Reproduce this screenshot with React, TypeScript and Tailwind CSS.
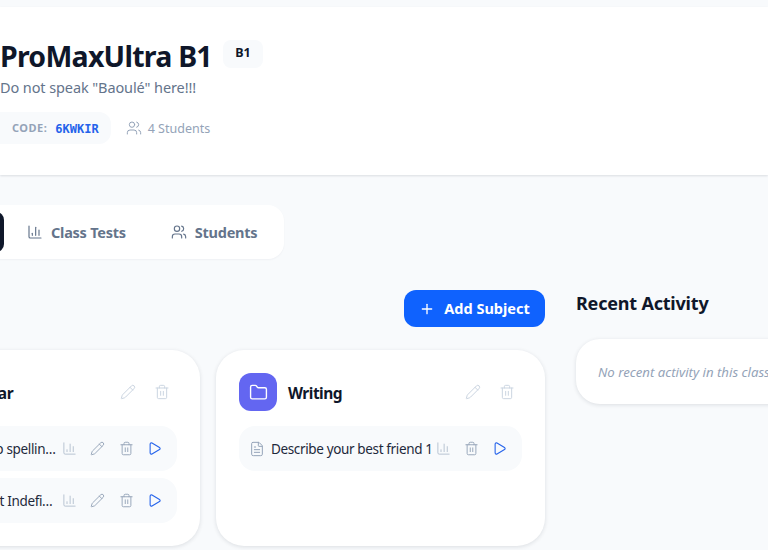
import { ChartColumn, FileText, Folder, Pencil, Play, Plus, Trash2, Users } from "lucide-react";

const font = { fontFamily: '"Noto Sans", sans-serif' };

function Row({ text, edit = true, last = false }: { text: string; edit?: boolean; last?: boolean }) {
  return (
    <div className={`flex h-[45px] items-center rounded-2xl bg-[#f8fafc] pl-[10px] pr-[8px] ${last ? "" : "mb-[7px]"}`}>
      <FileText className="h-[16px] w-[16px] shrink-0 text-[#94a3b8]" strokeWidth={1.5} />
      <span className="mt-[2px] ml-[6px] min-w-0 flex-1 truncate text-[13.5px] font-normal tracking-[-0.36px] text-[#1e293b]">{text}</span>
      <div className="flex shrink-0 items-center">
        <button className="mr-[4px] flex h-[28px] w-[20px] items-center justify-center text-[#b4c0cf]">
          <ChartColumn className="h-[15px] w-[15px]" strokeWidth={1.5} />
        </button>
        {edit && (
          <button className="flex h-[28px] w-[29px] items-center justify-center text-[#94a3b8]">
            <Pencil className="h-[15px] w-[15px]" strokeWidth={1.5} />
          </button>
        )}
        <button className="flex h-[28px] w-[28px] items-center justify-center text-[#94a3b8]">
          <Trash2 className="h-[15px] w-[15px]" strokeWidth={1.5} />
        </button>
        <button className="flex h-[28px] w-[29px] items-center justify-center text-[#2563eb]">
          <Play className="h-[15px] w-[15px]" strokeWidth={1.75} />
        </button>
      </div>
    </div>
  );
}

function SubjectCard({ title, children }: { title: string; children: React.ReactNode }) {
  return (
    <div className="h-[196px] w-[329px] shrink-0 rounded-[28px] bg-white px-[23px] pt-[23px] shadow-[0_1px_4px_rgba(15,23,42,0.12)]">
      <div className="mb-[15px] flex items-center">
        <div className="flex h-[38px] w-[38px] items-center justify-center rounded-xl bg-[#6366f1]">
          <Folder className="h-[19px] w-[19px] text-white" strokeWidth={1.75} />
        </div>
        <div className="mt-[3px] ml-[11px] flex-1 text-[15.5px] font-bold tracking-[-0.5px] text-[#0f172a]">{title}</div>
        <div className="flex items-center gap-[18px] pr-[7px] text-[#cbd5e1]">
          <Pencil className="h-[16px] w-[16px]" strokeWidth={1.5} />
          <Trash2 className="h-[16px] w-[16px]" strokeWidth={1.5} />
        </div>
      </div>
      {children}
    </div>
  );
}

export default function App() {
  return (
    <div className="h-[550px] w-[768px] overflow-hidden bg-[#f8fafc]" style={font}>
      <div className="mt-[7px] h-[168px] bg-white pt-[30px] shadow-[0_1px_2px_rgba(15,23,42,0.12)]">
        <div className="flex items-center">
          <h1 className="text-[28.5px] leading-[38px] font-bold tracking-[-0.75px] whitespace-nowrap text-[#0f172a]">ProMaxUltra B1</h1>
          <span className="mb-[5px] ml-[11px] flex h-[28px] w-[40px] items-center justify-center rounded-lg bg-[#f8fafc] text-[12.5px] font-bold text-[#0f172a]">B1</span>
        </div>
        <p className="mt-[2px] text-[14.5px] leading-[20px] tracking-[-0.1px] text-[#64748b]">Do not speak "Baoulé" here!!!</p>
        <div className="mt-[15px] flex items-center">
          <div className="ml-[-12px] flex h-[32px] items-center rounded-xl bg-[#f8fafc] pt-[1px] pr-[12px] pl-[24px]">
            <span className="text-[11px] font-bold tracking-[0.5px] text-[#94a3b8]">CODE:</span>
            <span className="ml-[8px] text-[12px] font-bold text-[#2563eb]" style={{ fontFamily: '"DejaVu Sans Mono", monospace' }}>6KWKIR</span>
          </div>
          <Users className="ml-[15px] h-[16px] w-[16px] text-[#94a3b8]" strokeWidth={1.5} />
          <span className="mt-[2px] ml-[6px] text-[12.5px] text-[#94a3b8]">4 Students</span>
        </div>
      </div>

      <div className="mt-[30px] ml-[-60px] flex h-[54px] w-[344px] items-center rounded-2xl bg-white pl-[8px] shadow-[0_1px_2px_rgba(15,23,42,0.04)]">
        <div className="h-[40px] w-[56px] shrink-0 rounded-lg bg-[#0f172a]" />
        <div className="ml-[23px] flex items-center gap-[8px] text-[14.5px] font-bold tracking-[-0.25px] text-[#64748b]">
          <ChartColumn className="h-[16px] w-[16px]" strokeWidth={1.75} />
          <span className="mt-[2px]">Class Tests</span>
        </div>
        <div className="ml-[45px] flex items-center gap-[8px] text-[14.5px] font-bold tracking-[-0.25px] text-[#64748b]">
          <Users className="h-[16px] w-[16px]" strokeWidth={1.75} />
          <span className="mt-[2px]">Students</span>
        </div>
      </div>

      <div className="mt-[31px] ml-[-129px] flex w-[1200px] gap-[31px]">
        <div className="w-[674px] shrink-0">
          <div className="flex justify-end">
            <button className="flex h-[37px] w-[141px] items-center justify-center gap-[9px] rounded-xl bg-[#0f62fe] text-[14.5px] font-bold text-white">
              <Plus className="h-[16px] w-[16px]" strokeWidth={2} />
              Add Subject
            </button>
          </div>
          <div className="mt-[23px] flex gap-[16px]">
            <SubjectCard title="Grammar">
              <Row text="Grammar tip spelling rules" />
              <Row text="Articles - Test Indefinite articles" last />
            </SubjectCard>
            <SubjectCard title="Writing">
              <Row text="Describe your best friend 1" edit={false} last />
            </SubjectCard>
          </div>
        </div>
        <div className="w-[300px] shrink-0">
          <h2 className="text-[18px] leading-[26px] font-bold tracking-[-0.2px] text-[#0f172a]">Recent Activity</h2>
          <div className="mt-[23px] flex h-[65px] items-center rounded-[24px] bg-white pl-[22px] shadow-[0_1px_4px_rgba(15,23,42,0.12)]">
            <span className="mt-[2px] text-[13.2px] whitespace-nowrap text-[#94a3b8] italic">No recent activity in this class</span>
          </div>
        </div>
      </div>
    </div>
  );
}
